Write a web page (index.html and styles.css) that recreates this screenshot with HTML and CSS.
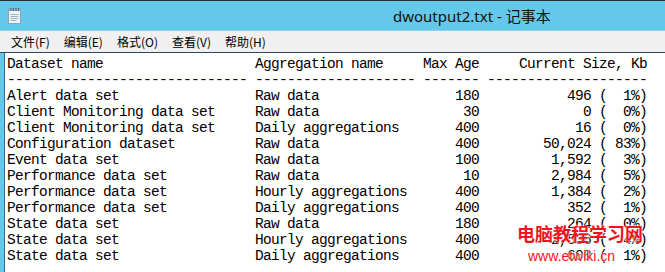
FILE: index.html
```
<!DOCTYPE html>
<html>
	<head>
		<title>dwoutput2.txt - 记事本</title>
		<link rel="stylesheet" href="styles.css">
	</head>
	<body>
		<div class="window">
			<div class="titlebar">
				<svg class="app-icon" width="16" height="18" viewBox="0 0 16 18">
					<rect x="1.5" y="2.5" width="12" height="15" fill="#eef4f8" stroke="#8aa4b8"/>
					<rect x="2" y="3" width="11" height="2" fill="#8fb4d6"/>
					<path d="M4 2 v3 M6.5 2 v3 M9 2 v3 M11.5 2 v3" stroke="#4a6a88" stroke-width="1"/>
					<path d="M3.5 8.5 h8 M3.5 10.5 h8 M3.5 12.5 h8 M3.5 14.5 h6" stroke="#9fb3c4" stroke-width="1"/>
				</svg>
				<div class="title">dwoutput2.txt - 记事本</div>
			</div>
			<div class="menubar">
				<span class="menu-item">文件(F)</span>
				<span class="menu-item">编辑(E)</span>
				<span class="menu-item">格式(O)</span>
				<span class="menu-item">查看(V)</span>
				<span class="menu-item">帮助(H)</span>
			</div>
			<div class="editor">
<pre class="text">Dataset name                   Aggregation name     Max Age     Current Size, Kb
------------------------------ -------------------- ------- --------------------
Alert data set                 Raw data                 180           496 (  1%)
Client Monitoring data set     Raw data                  30             0 (  0%)
Client Monitoring data set     Daily aggregations       400            16 (  0%)
Configuration dataset          Raw data                 400        50,024 ( 83%)
Event data set                 Raw data                 100         1,592 (  3%)
Performance data set           Raw data                  10         2,984 (  5%)
Performance data set           Hourly aggregations      400         1,384 (  2%)
Performance data set           Daily aggregations       400           352 (  1%)
State data set                 Raw data                 180           264 (  0%)
State data set                 Hourly aggregations      400         2,536 (  4%)
State data set                 Daily aggregations       400           608 (  1%)</pre>
				<div class="watermark">
					<div class="wm-big">电脑教程学习网</div>
					<div class="wm-small">www.etwiki.cn</div>
				</div>
			</div>
		</div>
	</body>
</html>
```

FILE: styles.css
```
body {
	margin: 0;
	overflow: hidden;
	background: #fff;
}

.window {
	width: 665px;
	height: 272px;
	border-top: 1px solid #2b2f33;
	box-sizing: border-box;
	overflow: hidden;
}

.titlebar {
	height: 29px;
	background: #63c8e9;
	border-bottom: 1px solid #8fd4ec;
	display: flex;
	align-items: center;
	padding-left: 7px;
}

.app-icon {
	display: block;
	margin-top: -2px;
}

.title {
	margin-left: 370px;
	font-family: "Noto Sans", "Noto Sans CJK SC", sans-serif;
	font-size: 15px;
	color: #111;
	padding-bottom: 1px;
}

.menubar {
	height: 21px;
	background: #f0f0f0;
	border-bottom: 1px solid #2c4763;
	display: flex;
	align-items: center;
	gap: 14px;
	padding-left: 11px;
	font-family: "Noto Sans CJK SC", sans-serif;
	font-size: 12px;
	color: #000;
}

.editor {
	position: relative;
	height: 220px;
	background: #fff;
	border-left: 4px solid #63c8e9;
	box-shadow: inset 1px 0 0 #3b6a93;
}

.text {
	margin: 0;
	padding: 3px 0 0 3px;
	font-family: "Liberation Mono", monospace;
	font-size: 14.5px;
	letter-spacing: -0.7px;
	line-height: 16px;
	color: #000;
}

.watermark {
	position: absolute;
	left: 513px;
	top: 168px;
	color: #f0141e;
	text-shadow: 0 0 2px #fff, 0 0 2px #fff;
}

.wm-big {
	font-family: "Noto Sans CJK SC", sans-serif;
	font-size: 18px;
	font-weight: bold;
	line-height: 24px;
}

.wm-small {
	font-family: "Liberation Sans", sans-serif;
	font-size: 14px;
	line-height: 16px;
	margin-top: 3px;
	margin-left: 11px;
}
```
